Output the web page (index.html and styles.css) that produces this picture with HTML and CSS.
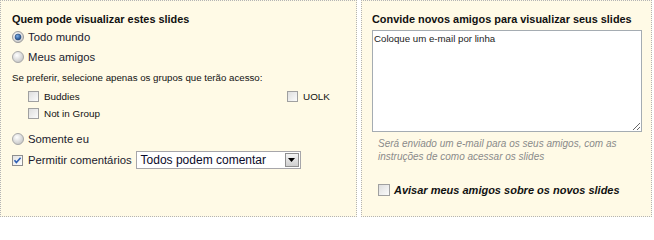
FILE: index.html
```html
<!DOCTYPE html>
<html lang="pt-BR">
<head>
<meta charset="utf-8">
<title>Permissões dos slides</title>
<link rel="stylesheet" href="styles.css">
</head>
<body>
<div class="wrap">
  <section class="panel left">
    <h2 class="title">Quem pode visualizar estes slides</h2>
    <div class="row opt">
      <svg class="radio" viewBox="0 0 12 12"><defs><radialGradient id="rg1" cx="40%" cy="35%" r="70%"><stop offset="0" stop-color="#ffffff"/><stop offset="1" stop-color="#c8c8c8"/></radialGradient><radialGradient id="dot" cx="40%" cy="35%" r="60%"><stop offset="0" stop-color="#7fb0e6"/><stop offset="1" stop-color="#1f4f8f"/></radialGradient></defs><circle cx="6" cy="6" r="5.5" fill="url(#rg1)" stroke="#9a9a9a"/><circle cx="6" cy="6" r="3" fill="url(#dot)" stroke="#2b4b78" stroke-width="0.6"/></svg>
      <span class="lbl">Todo mundo</span>
    </div>
    <div class="row opt">
      <svg class="radio" viewBox="0 0 12 12"><defs><radialGradient id="rg2" cx="40%" cy="35%" r="70%"><stop offset="0" stop-color="#ffffff"/><stop offset="1" stop-color="#c4c4c4"/></radialGradient></defs><circle cx="6" cy="6" r="5.5" fill="url(#rg2)" stroke="#a8a8a8"/></svg>
      <span class="lbl">Meus amigos</span>
    </div>
    <div class="row hint">Se preferir, selecione apenas os grupos que terão acesso:</div>
    <div class="groups">
      <div class="grp"><span class="cb"></span><span class="small">Buddies</span></div>
      <div class="grp"><span class="cb"></span><span class="small">UOLK</span></div>
      <div class="grp"><span class="cb"></span><span class="small">Not in Group</span></div>
    </div>
    <div class="row opt only">
      <svg class="radio" viewBox="0 0 12 12"><defs><radialGradient id="rg3" cx="40%" cy="35%" r="70%"><stop offset="0" stop-color="#ffffff"/><stop offset="1" stop-color="#c4c4c4"/></radialGradient></defs><circle cx="6" cy="6" r="5.5" fill="url(#rg3)" stroke="#a8a8a8"/></svg>
      <span class="lbl">Somente eu</span>
    </div>
    <div class="row opt comments">
      <svg class="check" viewBox="0 0 11 11"><defs><linearGradient id="cg1" x1="0" y1="0" x2="1" y2="1"><stop offset="0" stop-color="#e2e2e2"/><stop offset="1" stop-color="#ffffff"/></linearGradient></defs><rect x="0.5" y="0.5" width="10" height="10" fill="url(#cg1)" stroke="#8e8e8e"/><path d="M2.5 5.2 L4.4 7.6 L8.6 2.8" fill="none" stroke="#2d5fb4" stroke-width="1.6"/></svg>
      <span class="lbl">Permitir comentários</span>
      <div class="select">
        <span class="sel-text">Todos podem comentar</span>
        <span class="sel-btn"><svg viewBox="0 0 7 4" class="tri"><path d="M0 0 H7 L3.5 4 Z" fill="#000"/></svg></span>
      </div>
    </div>
  </section>
  <section class="panel right">
    <h2 class="title">Convide novos amigos para visualizar seus slides</h2>
    <textarea class="emails">Coloque um e-mail por linha</textarea>
    <p class="note">Será enviado um e-mail para os seus amigos, com as instruções de como acessar os slides</p>
    <div class="row notify">
      <span class="cb"></span>
      <span class="notify-lbl">Avisar meus amigos sobre os novos slides</span>
    </div>
  </section>
</div>
</body>
</html>
```

FILE: styles.css
```css
html, body {
  margin: 0;
  padding: 0;
  background: #ffffff;
}
body {
  font-family: "Liberation Sans", Arial, sans-serif;
  color: #000;
  width: 654px;
  height: 218px;
}
.wrap {
  display: flex;
  gap: 4px;
  height: 217px;
}
.panel {
  box-sizing: border-box;
  background: #fffae6;
  border: 1px dotted #b4b4b4;
  height: 217px;
}
.left {
  width: 357px;
  padding: 11px 0 0 11px;
}
.right {
  width: 291px;
  padding: 11px 0 0 10px;
}
.title {
  margin: 0;
  font-size: 10.9px;
  font-weight: bold;
  line-height: 15px;
  height: 15px;
  color: #111;
}
.row {
  display: flex;
  align-items: center;
}
.opt {
  height: 20px;
}
.radio {
  width: 12px;
  height: 12px;
  margin-right: 4px;
  flex: none;
}
.check {
  width: 11px;
  height: 11px;
  margin-right: 5px;
  flex: none;
}
.lbl {
  font-size: 11.3px;
  color: #1a1a2e;
}
.hint {
  font-size: 9.7px;
  height: 21px;
  color: #111;
}
.groups {
  display: grid;
  grid-template-columns: 259px 60px;
  grid-auto-rows: 17px;
  padding-left: 16px;
}
.grp {
  display: flex;
  align-items: center;
}
.cb {
  box-sizing: border-box;
  width: 11px;
  height: 11px;
  border: 1px solid #a0a0a0;
  background: linear-gradient(135deg, #dedede, #fbfbfb);
  margin-right: 5px;
  flex: none;
}
.small {
  font-size: 9.9px;
  color: #111;
}
.only {
  margin-top: 7px;
}
.comments {
  height: 22px;
}
.select {
  box-sizing: border-box;
  margin-left: 4px;
  width: 165px;
  height: 18px;
  border: 1px solid #a7a6aa;
  background: #fff;
  display: flex;
  align-items: center;
  justify-content: space-between;
}
.sel-text {
  font-size: 12px;
  color: #0b0b2a;
  padding-left: 4px;
}
.sel-btn {
  box-sizing: border-box;
  width: 14px;
  height: 14px;
  margin-right: 1px;
  border: 1px solid #8f8f8f;
  background: linear-gradient(#f4f4f4, #cfcfcf);
  display: flex;
  align-items: center;
  justify-content: center;
}
.tri {
  width: 7px;
  height: 4px;
}
.emails {
  display: block;
  box-sizing: border-box;
  margin: 3px 0 0 0;
  width: 270px;
  height: 102px;
  border: 1px solid #a5acb2;
  background: #fff;
  font-family: "Liberation Sans", Arial, sans-serif;
  font-size: 9.7px;
  color: #222;
  padding: 2px 1px;
  resize: both;
  outline: none;
}
.note {
  margin: 5px 0 0 6px;
  font-size: 10px;
  line-height: 13px;
  font-style: italic;
  color: #8a8a8a;
  width: 250px;
}
.notify {
  margin: 20px 0 0 6px;
  height: 14px;
}
.notify .cb {
  width: 12px;
  height: 12px;
  margin-right: 4px;
}
.notify-lbl {
  font-size: 11px;
  font-weight: bold;
  font-style: italic;
  color: #111;
}
```
